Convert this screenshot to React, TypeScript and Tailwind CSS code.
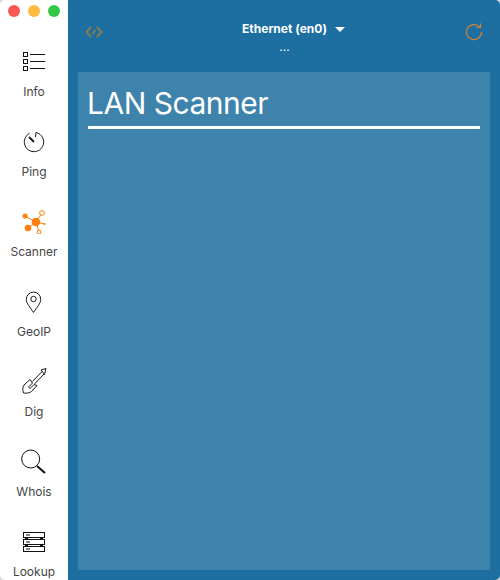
import { ReactNode } from "react";

const stroke = "#1a1a1a";

function InfoIcon() {
  return (
    <svg width="24" height="24" viewBox="0 0 24 24" fill="none" stroke="#111" strokeWidth="1">
      <rect x="1.500" y="3.500" width="4" height="4" />
      <rect x="1.500" y="10.500" width="4" height="4" />
      <rect x="1.500" y="17.500" width="4" height="4" />
      <path d="M8 5.500h15M8 12.500h15M8 19.500h15" />
    </svg>
  );
}

function PingIcon() {
  return (
    <svg width="24" height="24" viewBox="0 0 24 24" fill="none" stroke={stroke} strokeWidth="1">
      <path d="M7.500 4.400A9.700 9.700 0 1 0 14 3.500L13.500 8" />
      <path d="M7 8L12 13" strokeWidth="2" />
    </svg>
  );
}

function ScannerIcon() {
  return (
    <svg width="26" height="26" viewBox="0 0 26 26" fill="none" stroke="#ff7f0f" strokeWidth="1">
      <path d="M4 8l11 6M7 20l8-6M15 14l6-9M15 14l3 10M15 14l8.600 2" />
      <circle cx="15" cy="14" r="4.300" fill="#ff7f0f" stroke="none" />
      <circle cx="4" cy="8" r="2.500" fill="#ff7f0f" stroke="none" />
      <circle cx="7" cy="20" r="3.300" fill="#ff7f0f" stroke="none" />
      <circle cx="21" cy="5" r="2.400" fill="#fff" />
      <circle cx="18" cy="24" r="2" fill="#fff" />
      <circle cx="23.600" cy="16" r="1" fill="#ff7f0f" stroke="none" />
    </svg>
  );
}

function GeoIcon() {
  return (
    <svg width="24" height="24" viewBox="0 0 24 24" fill="none" stroke={stroke} strokeWidth="1">
      <path d="M11.500 23.500C8 18 4.300 14.500 4.300 10.300a7.200 7.200 0 0 1 14.400 0C18.700 14.500 15 18 11.500 23.500z" />
      <circle cx="11.500" cy="10" r="2.700" />
    </svg>
  );
}

function DigIcon() {
  return (
    <svg width="26" height="28" viewBox="0 0 26 28" fill="none" stroke={stroke} strokeWidth="1">
      <path d="M9 12.500L3 18c-1.500 2-1.500 5-.5 8 3 .5 6 0 8-1.500l5.500-6-3 -1-4 4-1.500-1.500 4-4z" />
      <path d="M11.500 14.500L21 4.500M13.500 17L23 7" />
      <path d="M20 3L25 1.500 23.500 7.500z" />
    </svg>
  );
}

function WhoisIcon() {
  return (
    <svg width="26" height="26" viewBox="0 0 26 26" fill="none" stroke="#111">
      <circle cx="9.700" cy="11" r="9" strokeWidth="1" />
      <path d="M16 18L24 25" strokeWidth="2" />
    </svg>
  );
}

function LookupIcon() {
  return (
    <svg width="24" height="24" viewBox="0 0 24 24" fill="none" stroke="#111" strokeWidth="1">
      <rect x="1.500" y="3.500" width="21" height="5" />
      <rect x="1.500" y="10.500" width="21" height="5" />
      <rect x="1.500" y="17.500" width="21" height="5" />
      <path d="M4 6h4M4 13h4M4 20h4" />
      <path d="M3 9.500h3M18 9.500h3M3 16.500h3M18 16.500h3" strokeWidth="1.500" />
    </svg>
  );
}

function NavItem({ icon, label }: { icon: ReactNode; label: string }) {
  return (
    <div className="flex h-20 shrink-0 flex-col items-center">
      <div className="flex h-[34px] w-full items-center justify-center">{icon}</div>
      <span className="mt-1.5 text-xs leading-4 text-[#444444]">{label}</span>
    </div>
  );
}

function App() {
  return (
    <div className="h-[580px] w-[500px] overflow-hidden bg-[#d8d8d8] font-['Inter',sans-serif]">
      <div className="flex h-full overflow-hidden rounded-[5px]">
        <aside className="flex h-full w-[68px] shrink-0 flex-col overflow-hidden bg-white">
          <div className="flex h-11 shrink-0 items-start gap-2 pl-2 pt-[5px]">
            <span className="h-3 w-3 rounded-full bg-[#fc5753]" />
            <span className="h-3 w-3 rounded-full bg-[#fdbc40]" />
            <span className="h-3 w-3 rounded-full bg-[#33c748]" />
          </div>
          <NavItem icon={<InfoIcon />} label="Info" />
          <NavItem icon={<PingIcon />} label="Ping" />
          <NavItem icon={<ScannerIcon />} label="Scanner" />
          <NavItem icon={<GeoIcon />} label="GeoIP" />
          <NavItem icon={<DigIcon />} label="Dig" />
          <NavItem icon={<WhoisIcon />} label="Whois" />
          <NavItem icon={<LookupIcon />} label="Lookup" />
        </aside>
        <main className="flex min-w-0 flex-1 flex-col bg-[#1c6fa0] px-2.5 pb-2.5">
          <header className="flex h-[72px] shrink-0 items-start justify-between">
            <svg className="ml-[7px] mt-[25px]" width="18" height="14" viewBox="0 0 18 14" fill="none" stroke="#8a7a55" strokeWidth="2">
              <path d="M6 2L1.500 7 6 12M12 2l4.500 5L12 12M7.500 9L10.500 5" />
            </svg>
            <div className="flex flex-col items-center pt-[21px] text-white">
              <div className="relative text-xs font-bold leading-4">
                Ethernet (en0)
                <span className="absolute left-full top-[6px] ml-2 h-0 w-0 border-x-[5px] border-t-[5px] border-x-transparent border-t-white" />
              </div>
              <span className="mt-[2px] text-xs leading-4">...</span>
            </div>
            <svg className="mr-[6px] mt-[23px]" width="18" height="18" viewBox="0 0 18 18" fill="none" stroke="#d9822b" strokeWidth="1.200">
              <path d="M13.500 4A7.500 7.500 0 1 0 15.500 9" />
              <path d="M14.500 0.500V4.500H10.500" />
            </svg>
          </header>
          <section className="min-h-0 flex-1 bg-[#3d83ab] px-2.5 pt-3">
            <h1 className="border-b-[3px] border-white pb-1 indent-[-1px] text-[30px] leading-[38px] tracking-[-0.5px] text-white">LAN Scanner</h1>
          </section>
        </main>
      </div>
    </div>
  );
}

export default App;
